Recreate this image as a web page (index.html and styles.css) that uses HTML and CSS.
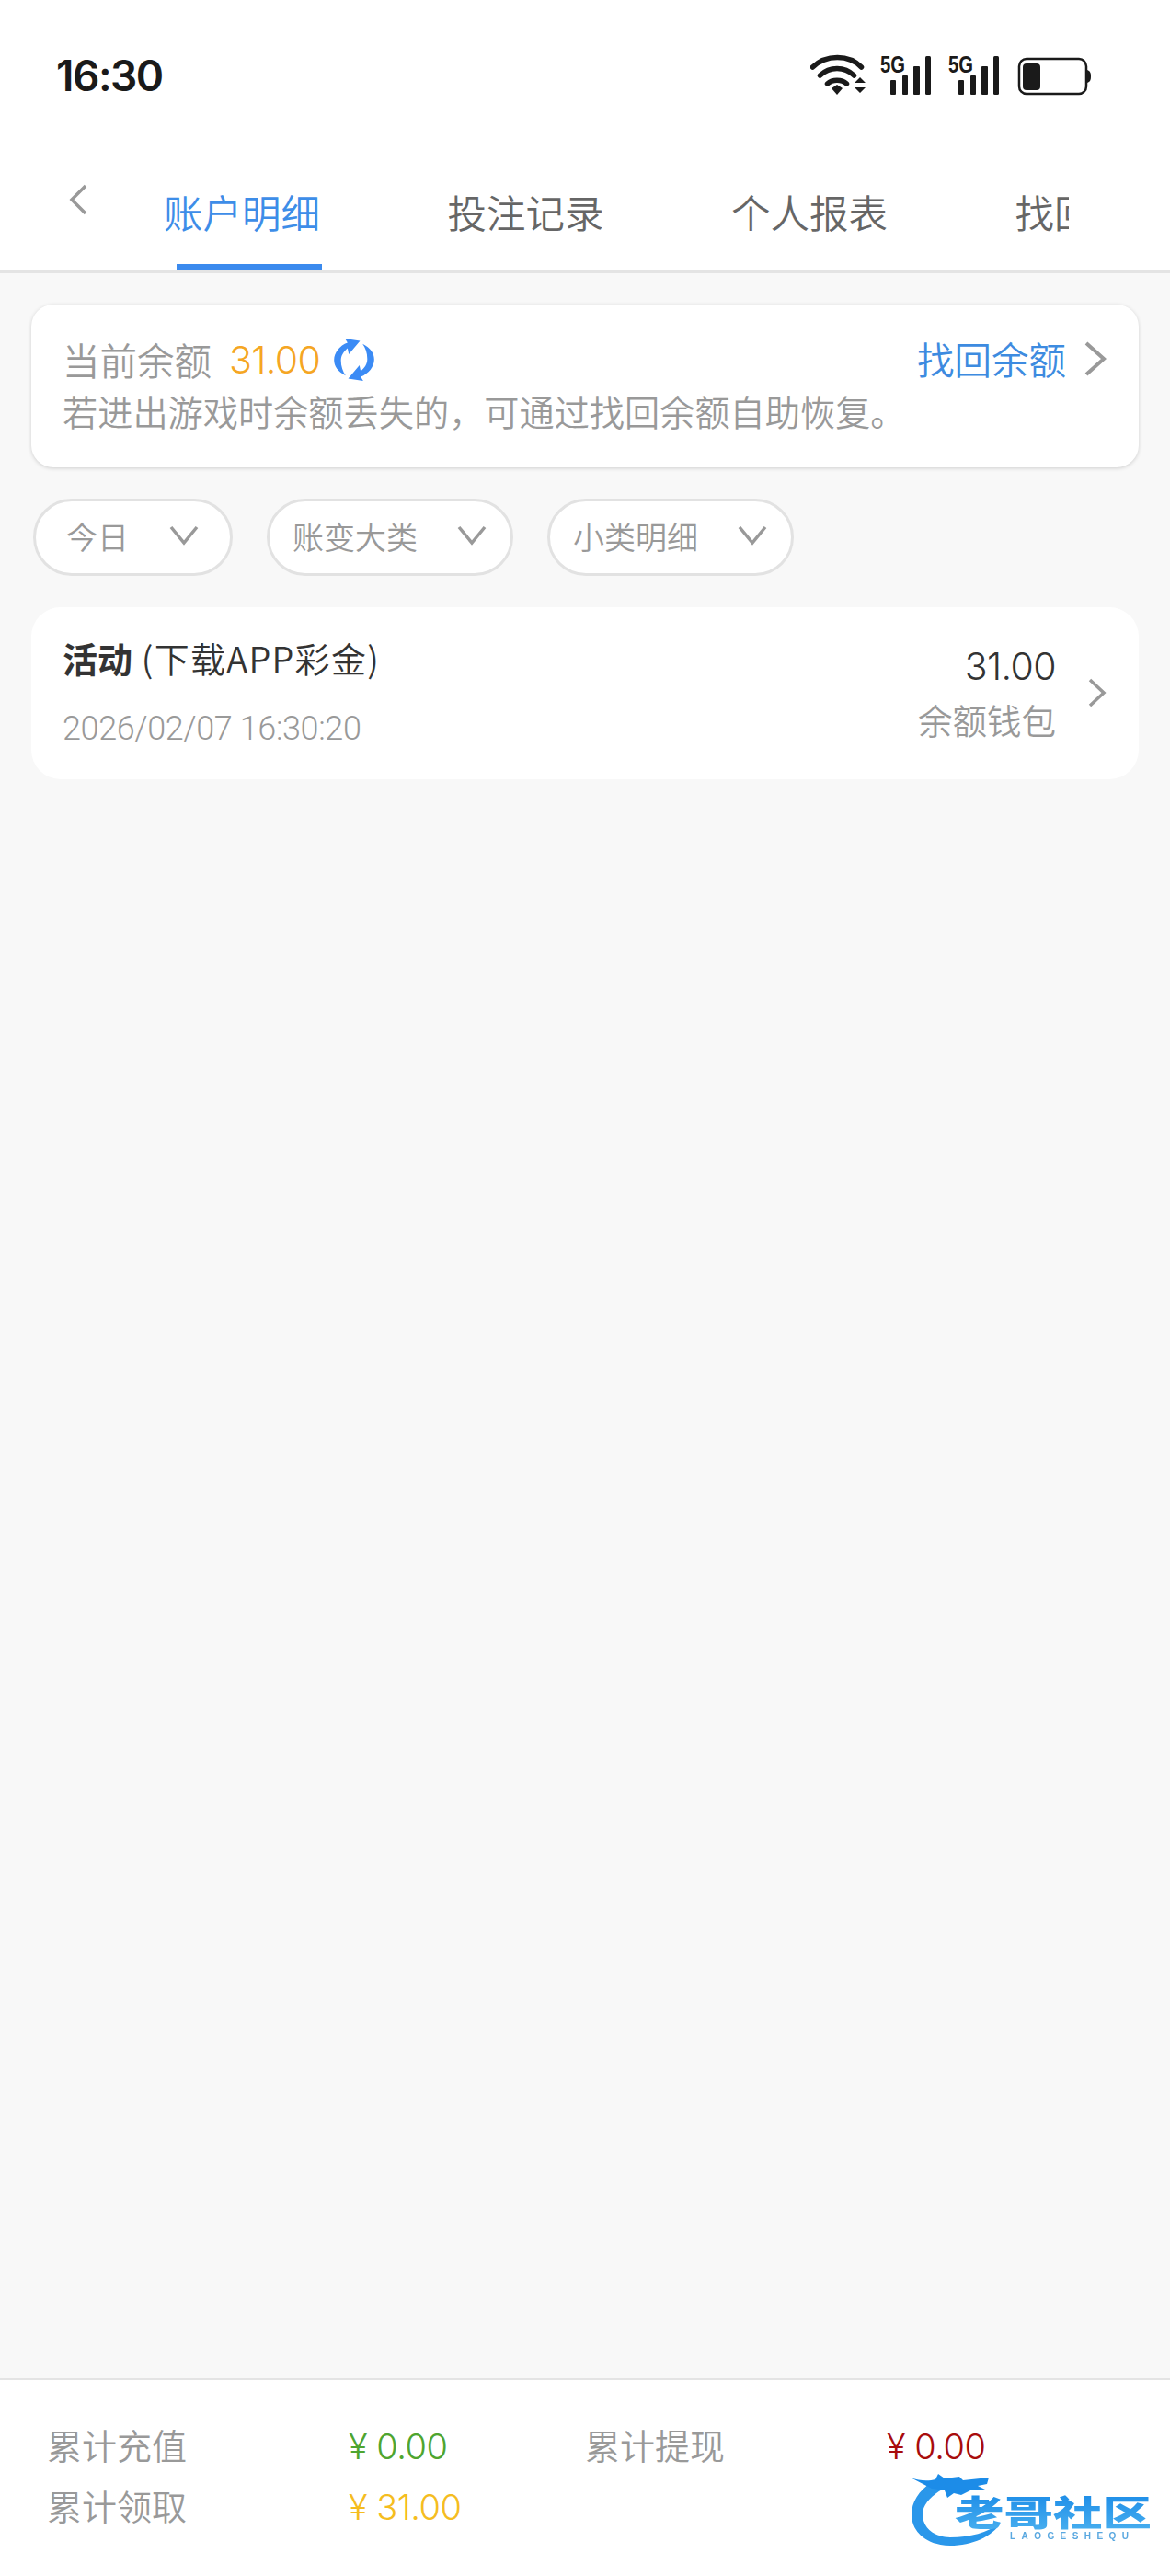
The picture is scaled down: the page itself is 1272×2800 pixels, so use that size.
FILE: index.html
```html
<!DOCTYPE html>
<html lang="zh-CN">
<head>
<meta charset="utf-8">
<title>账户明细</title>
<link rel="stylesheet" href="styles.css">
</head>
<body>
<div class="page">
  <header class="header">
    <div class="status">
      <span class="time">16:30</span>
      <svg class="status-icons" width="305" height="54" viewBox="0 -10 305 54">
        <g fill="none" stroke="#1a1a1a" stroke-width="5.5" stroke-linecap="round">
          <path d="M2.500 13 C17 -1 42 -1 55.500 13"/>
          <path d="M10.500 22 C21 12 37 12 47.500 22"/>
          <path d="M18.500 31 C24 26 34 26 39.500 31"/>
        </g>
        <path class="ink" d="M23 36 L29 32 L35 36 L29 43 Z"/>
        <path class="ink" d="M53 30 L59 24 L65 30 Z M53 35 L65 35 L59 41 Z" transform="translate(-5 0)"/>
        <g>
          <text class="five-g" x="76" y="19" textLength="27" lengthAdjust="spacingAndGlyphs">5G</text>
          <rect class="ink" x="87" y="27" width="6" height="16" rx="1"/>
          <rect class="ink" x="100" y="22" width="6" height="21" rx="1"/>
          <rect class="ink" x="112" y="12" width="7" height="31" rx="1"/>
          <rect class="ink" x="125" y="1" width="6" height="42" rx="1.500"/>
        </g>
        <g>
          <text class="five-g" x="150" y="19" textLength="27" lengthAdjust="spacingAndGlyphs">5G</text>
          <rect class="ink" x="161" y="27" width="6" height="16" rx="1"/>
          <rect class="ink" x="174" y="22" width="6" height="21" rx="1"/>
          <rect class="ink" x="186" y="12" width="7" height="31" rx="1"/>
          <rect class="ink" x="199" y="1" width="6" height="42" rx="1.500"/>
        </g>
        <rect x="227" y="4" width="73" height="38" rx="8" fill="none" stroke="#1a1a1a" stroke-width="2.500"/>
        <rect class="ink" x="231" y="9" width="19" height="29" rx="4"/>
        <path class="ink" d="M301 16 C304 17 305 19 305 23 C305 27 304 29 301 30 Z"/>
      </svg>
    </div>
    <nav class="nav">
      <svg class="back" width="20" height="34" viewBox="0 0 20 34"><path d="M18 2 L3 17 L18 32" fill="none" stroke="#999" stroke-width="3.500"/></svg>
      <div class="tabs">
        <div class="tab tab-active"><span class="tab-label">账户明细</span><i class="tab-bar"></i></div>
        <div class="tab"><span class="tab-label">投注记录</span></div>
        <div class="tab"><span class="tab-label">个人报表</span></div>
        <div class="tab"><span class="tab-label">找回余额</span></div>
      </div>
    </nav>
  </header>

  <main class="main">
    <section class="balance">
      <div class="balance-top">
        <span class="balance-label">当前余额</span>
        <span class="balance-value">31.00</span>
        <svg class="refresh" width="44" height="46" viewBox="0 0 128 135">
          <path d="M35 0 L83 7 L47 50 L43 31 C30 42 22 55 22 70 C22 90 28 105 37 118 C12 105 0 88 0 68 C0 45 18 22 43 13 Z"/>
          <path d="M35 0 L83 7 L47 50 L43 31 C30 42 22 55 22 70 C22 90 28 105 37 118 C12 105 0 88 0 68 C0 45 18 22 43 13 Z" transform="rotate(180 64 67.500)"/>
        </svg>
        <span class="balance-link">找回余额</span>
        <svg class="chev-big" width="26" height="38" viewBox="0 0 26 38"><path d="M3 2 L22 19 L3 36" fill="none" stroke="#999" stroke-width="4"/></svg>
      </div>
      <p class="balance-tip">若进出游戏时余额丢失的，可通过找回余额自助恢复。</p>
    </section>

    <div class="filters">
      <div class="pill pill-short"><span>今日</span><svg class="chev-down" width="32" height="22" viewBox="0 0 32 22"><path d="M2 2 L16 19 L30 2" fill="none" stroke="#999" stroke-width="3.500"/></svg></div>
      <div class="pill"><span>账变大类</span><svg class="chev-down" width="32" height="22" viewBox="0 0 32 22"><path d="M2 2 L16 19 L30 2" fill="none" stroke="#999" stroke-width="3.500"/></svg></div>
      <div class="pill"><span>小类明细</span><svg class="chev-down" width="32" height="22" viewBox="0 0 32 22"><path d="M2 2 L16 19 L30 2" fill="none" stroke="#999" stroke-width="3.500"/></svg></div>
    </div>

    <article class="record">
      <div class="record-left">
        <div class="record-title"><b>活动</b> (下载APP彩金)</div>
        <div class="record-date">2026/02/07 16:30:20</div>
      </div>
      <div class="record-right">
        <div class="record-amount">31.00</div>
        <div class="record-wallet">余额钱包</div>
      </div>
      <svg class="chev-small" width="20" height="32" viewBox="0 0 20 32"><path d="M2 2 L17 16 L2 30" fill="none" stroke="#999" stroke-width="3.500"/></svg>
    </article>
  </main>

  <footer class="footer">
    <div class="totals">
      <span class="t-label">累计充值</span><span class="t-val green">¥ 0.00</span>
      <span class="t-label">累计提现</span><span class="t-val red">¥ 0.00</span>
      <span class="t-label">累计领取</span><span class="t-val yellow">¥ 31.00</span>
    </div>
    <svg class="logo" width="270" height="90" viewBox="0 0 270 90">
      <defs>
        <linearGradient id="lg" x1="0" y1="0" x2="0" y2="1">
          <stop offset="0" stop-color="#1586e6"/>
          <stop offset="1" stop-color="#4cb2f0"/>
        </linearGradient>
      </defs>
      <path class="logo-fill" d="M28 13 C14 22 6 35 6 48 C6 68 24 82 48 82 C72 82 94 72 103 57 C88 68 70 73 48 73 C30 73 18 62 18 48 C18 36 30 25 45 18 Z"/>
      <path class="logo-head" d="M5 8 C15 12 25 12 32 10 L35 4 L42 9 L58 7 L62 11 L90 8 L88 15 L78 17 L86 21 L70 22 L60 27 L52 25 L45 30 L42 22 L28 20 Z"/>
      <text class="logo-text" x="53" y="60" textLength="214" lengthAdjust="spacingAndGlyphs">老哥社区</text>
      <text class="logo-sub" x="113" y="75" textLength="129" lengthAdjust="spacing">LAOGESHEQU</text>
    </svg>
  </footer>
</div>
</body>
</html>
```
FILE: styles.css
```css
* { box-sizing: border-box; }
html, body { margin: 0; padding: 0; }
body {
  font-family: "Roboto", "Noto Sans CJK SC", sans-serif;
  color: #333;
  background: #f8f8f8;
}
.page {
  width: 1272px;
  height: 2800px;
  display: flex;
  flex-direction: column;
}

/* header */
.header {
  background: #fff;
  border-bottom: 3px solid #e4e4e4;
  flex: none;
}
.status {
  height: 190px;
  padding: 60px 86px 0 61px;
  display: flex;
  justify-content: space-between;
  align-items: flex-start;
}
.time {
  font-family: "Inter", sans-serif;
  font-size: 46px;
  font-weight: 600;
  line-height: 44px;
  color: #1a1a1a;
  letter-spacing: -1.5px;
}
.status-icons { display: block; margin-top: -10px; }
.ink { fill: #1a1a1a; }
.five-g {
  font-family: "Liberation Sans", sans-serif;
  font-weight: 700;
  font-size: 25.500px;
  fill: #1a1a1a;
}
.nav {
  display: flex;
  align-items: flex-start;
  height: 104px;
  padding-left: 75px;
}
.back { flex: none; margin-top: 10px; }
.tabs {
  margin-left: 83px;
  width: 984px;
  display: flex;
  gap: 140.500px;
  overflow: hidden;
  padding-top: 10px;
}
.tab {
  flex: none;
  display: flex;
  flex-direction: column;
}
.tab-label {
  font-family: "Noto Sans CJK SC", sans-serif;
  font-size: 42.500px;
  font-weight: 350;
  line-height: 60px;
  color: #666;
  width: 168px;
  white-space: nowrap;
}
.tab-active .tab-label { color: #3d8de8; }
.tab-bar {
  display: block;
  width: 158px;
  height: 7px;
  margin: 27px -4px 0 14px;
  background: #3b8aee;
}

/* main */
.main {
  flex: 1;
  padding: 34px 34px 0;
  background: #f8f8f8;
}
.balance {
  height: 177px;
  background: #fff;
  border-radius: 24px;
  box-shadow: 0 1px 4px rgba(0, 0, 0, .17);
  padding: 33px 34px 0 34px;
}
.balance-top {
  display: flex;
  align-items: center;
  height: 50px;
}
.balance-label, .balance-link {
  font-family: "Noto Sans CJK SC", sans-serif;
  font-size: 40.500px;
  font-weight: 350;
  color: #999;
}
.balance-label { padding-top: 2px; }
.balance-value {
  margin-left: 19px;
  padding-top: 4px;
  font-family: "Inter", sans-serif;
  font-size: 41px;
  font-weight: 300;
  letter-spacing: -.6px;
  color: #f5a623;
}
.refresh { margin: 4px 0 0 15px; fill: #3b8bf5; flex: none; }
.balance-link { margin-left: auto; color: #3d8be0; }
.chev-big { margin-left: 19px; flex: none; margin-top: 1px; }
.balance-tip {
  margin: 10px 0 0;
  font-family: "Noto Sans CJK SC", sans-serif;
  font-size: 38.200px;
  font-weight: 350;
  line-height: 46px;
  color: #999;
  white-space: nowrap;
}

/* filters */
.filters {
  margin-top: 34px;
  display: flex;
  gap: 37px;
  padding-left: 2px;
}
.pill {
  width: 268px;
  height: 84px;
  border: 3px solid #e2e2e2;
  border-radius: 42px;
  background: #fff;
  display: flex;
  align-items: center;
  justify-content: space-between;
  padding: 0 26px 4px 25px;
  font-family: "Noto Sans CJK SC", sans-serif;
  font-size: 34px;
  font-weight: 350;
  color: #999;
}
.pill-short { width: 217px; padding-left: 33px; padding-right: 34px; }
.chev-down { flex: none; }

/* record */
.record {
  margin-top: 34px;
  height: 187px;
  background: #fff;
  border-radius: 32px;
  display: flex;
  align-items: center;
  padding: 0 35px 0 34px;
}
.record-left { flex: 1; padding-top: 6px; }
.record-title {
  font-family: "Noto Sans CJK SC", sans-serif;
  font-size: 38px;
  font-weight: 350;
  line-height: 50px;
  letter-spacing: 1.300px;
  color: #333;
  margin-top: -10px;
}
.record-title b { font-weight: 700; letter-spacing: 0; }
.record-date {
  font-size: 36px;
  font-weight: 300;
  letter-spacing: -.4px;
  line-height: 44px;
  color: #999;
  margin-top: 30px;
}
.record-right {
  text-align: right;
  margin-top: -2px;
}
.record-amount {
  font-family: "Inter", sans-serif;
  font-size: 41px;
  font-weight: 300;
  letter-spacing: -.6px;
  line-height: 50px;
  color: #333;
}
.record-wallet {
  font-family: "Noto Sans CJK SC", sans-serif;
  font-size: 37.500px;
  font-weight: 350;
  line-height: 50px;
  color: #999;
  margin-top: 8px;
}
.chev-small { margin-left: 35px; flex: none; margin-top: -1px; }

/* footer */
.footer {
  flex: none;
  position: relative;
  height: 215px;
  background: #fff;
  border-top: 2px solid #e4e4e4;
  padding: 43px 0 0 51px;
}
.totals {
  display: grid;
  grid-template-columns: 328px 257px 328px auto;
  grid-auto-rows: 66px;
  align-items: start;
}
.t-label {
  font-family: "Noto Sans CJK SC", sans-serif;
  font-size: 38px;
  font-weight: 350;
  line-height: 54px;
  color: #999;
}
.t-val {
  font-family: "Inter", sans-serif;
  font-size: 38px;
  font-weight: 300;
  line-height: 58px;
  letter-spacing: -.5px;
}
.green { color: #4ea52f; }
.red { color: #a80c0c; }
.yellow { color: #f5bd1f; }

.logo {
  position: absolute;
  left: 985px;
  top: 98px;
  filter: blur(.7px);
}
.logo-fill { fill: #2a97ea; }
.logo-head { fill: #1c8ce8; }
.logo-text {
  font-family: "Noto Sans CJK SC", sans-serif;
  font-weight: 900;
  font-size: 38px;
  fill: url(#lg);
}
.logo-sub {
  font-family: "Liberation Sans", sans-serif;
  font-size: 10px;
  font-weight: 700;
  fill: #5aa8e0;
}
```
